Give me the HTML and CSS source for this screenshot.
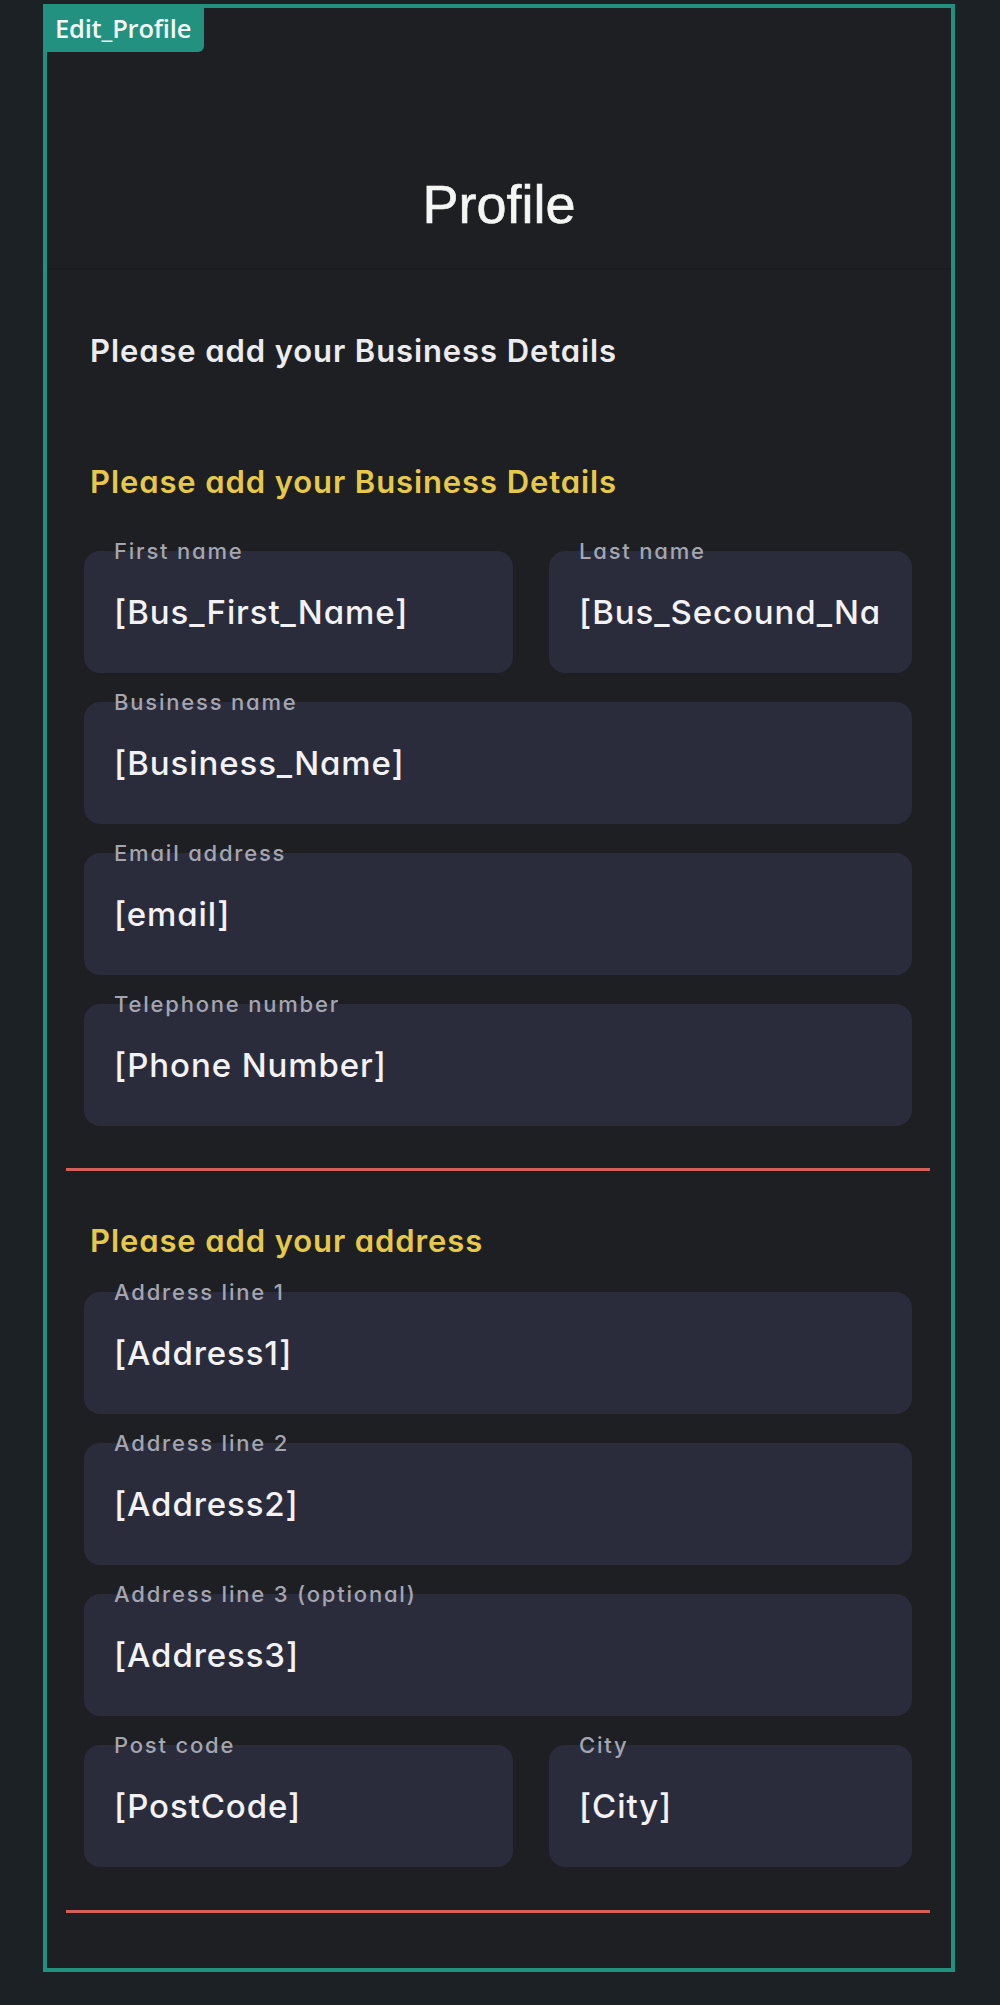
FILE: index.html
```html
<!DOCTYPE html>
<html lang="en">
<head>
<meta charset="utf-8">
<title>Edit_Profile</title>
<link rel="stylesheet" href="styles.css">
</head>
<body>
<div class="frame">
  <div class="badge">Edit_Profile</div>
  <header class="top">
    <h1 class="title">Profile</h1>
  </header>
  <main class="content">
    <p class="intro">Please add your Business Details</p>

    <section class="group">
      <h2 class="group-title">Please add your Business Details</h2>
      <div class="fields">
        <div class="row two">
          <div class="field">
            <label class="label">First name</label>
            <div class="box"><span class="val">[Bus_First_Name]</span></div>
          </div>
          <div class="field">
            <label class="label">Last name</label>
            <div class="box"><span class="val">[Bus_Secound_Name]</span></div>
          </div>
        </div>
        <div class="field">
          <label class="label">Business name</label>
          <div class="box"><span class="val">[Business_Name]</span></div>
        </div>
        <div class="field">
          <label class="label">Email address</label>
          <div class="box"><span class="val">[email]</span></div>
        </div>
        <div class="field">
          <label class="label">Telephone number</label>
          <div class="box"><span class="val">[Phone Number]</span></div>
        </div>
      </div>
    </section>

    <hr class="rule rule-first">

    <section class="group">
      <h2 class="group-title second">Please add your address</h2>
      <div class="fields fields-second">
        <div class="field">
          <label class="label">Address line 1</label>
          <div class="box"><span class="val">[Address1]</span></div>
        </div>
        <div class="field">
          <label class="label">Address line 2</label>
          <div class="box"><span class="val">[Address2]</span></div>
        </div>
        <div class="field">
          <label class="label">Address line 3 (optional)</label>
          <div class="box"><span class="val">[Address3]</span></div>
        </div>
        <div class="row two">
          <div class="field">
            <label class="label">Post code</label>
            <div class="box"><span class="val">[PostCode]</span></div>
          </div>
          <div class="field">
            <label class="label">City</label>
            <div class="box"><span class="val">[City]</span></div>
          </div>
        </div>
      </div>
    </section>

    <hr class="rule rule-last">
  </main>
</div>
</body>
</html>
```
FILE: styles.css
```css
* {
  box-sizing: border-box;
}

html, body {
  margin: 0;
  padding: 0;
}

body {
  background: #1b2124;
  min-height: 2005px;
  padding-top: 4px;
  font-family: Inter, "Noto Sans", sans-serif;
  font-feature-settings: "cv11";
}

.frame {
  position: relative;
  width: 912px;
  height: 1968px;
  margin-left: 43px;
  border: 4px solid #22907e;
  background: #1e1f23;
}

.badge {
  position: absolute;
  top: -4px;
  left: -4px;
  height: 48px;
  padding: 0 13px 0 12px;
  background: #22917f;
  border-radius: 0 0 6px 0;
  color: #f3f6f5;
  font-family: "Open Sans", "Liberation Sans", sans-serif;
  font-weight: 600;
  font-size: 25.5px;
  line-height: 48px;
  letter-spacing: -0.2px;
}

.top {
  padding: 170px 0 37px;
  border-bottom: 2px solid #1a1b1e;
}

.title {
  margin: 0;
  text-align: center;
  color: #f5f5f5;
  font-family: "Liberation Sans", Arial, sans-serif;
  font-weight: 400;
  font-size: 54px;
  line-height: 53px;
  -webkit-text-stroke: 0.6px #f5f5f5;
}

.content {
  padding: 0 21px 0 19px;
}

.intro {
  margin: 62px 0 0 24px;
  color: #ececee;
  font-size: 31px;
  font-weight: 600;
  line-height: 37px;
  letter-spacing: 0.9px;
}

.group-title {
  margin: 94px 0 0 24px;
  color: #e6c94a;
  font-size: 31px;
  font-weight: 600;
  line-height: 37px;
  letter-spacing: 0.9px;
}

.group-title.second {
  margin-top: 51px;
}

.fields {
  display: flex;
  flex-direction: column;
  gap: 18px;
  margin: 40px 18px 0 18px;
}

.fields-second {
  margin-top: 22px;
}

.row.two {
  display: grid;
  grid-template-columns: 13fr 11fr;
  column-gap: 36px;
}

.field {
  display: flex;
  flex-direction: column;
  min-width: 0;
}

.label {
  position: relative;
  z-index: 1;
  display: block;
  height: 22px;
  margin-bottom: -11px;
  padding-left: 30px;
  color: #a3a5b0;
  font-size: 22px;
  font-weight: 500;
  line-height: 22px;
  letter-spacing: 1.8px;
  white-space: nowrap;
}

.box {
  height: 122px;
  padding: 41px 30px 0 30px;
  background: #2b2c3b;
  border-radius: 16px;
}

.val {
  display: block;
  overflow: hidden;
  white-space: nowrap;
  color: #f2f2f4;
  font-size: 33px;
  font-weight: 500;
  line-height: 40px;
  letter-spacing: 0.9px;
}

.rule {
  height: 3px;
  margin: 42px 0 0 0;
  border: 0;
  background: #d55f59;
}

.rule-last {
  margin-top: 43px;
}
```
